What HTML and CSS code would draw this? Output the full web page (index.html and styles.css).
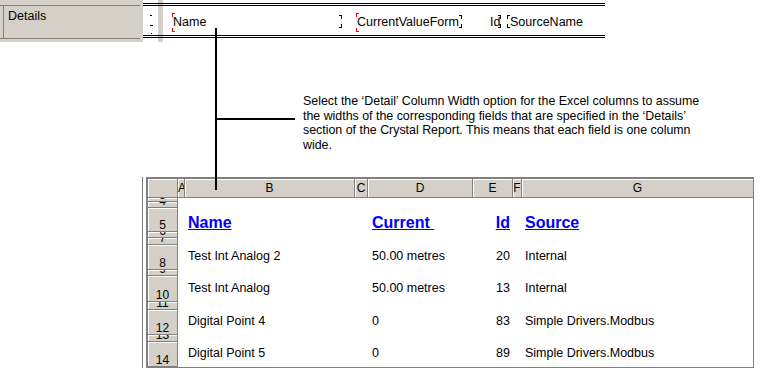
FILE: index.html
```html
<!DOCTYPE html>
<html lang="en">
<head>
    <meta charset="UTF-8">
    <title>Detail Column Width</title>
    <link rel="stylesheet" href="styles.css">
</head>
<body>
    <div class="page">
        <!-- Crystal Report designer: the Details section -->
        <div class="report">
            <div class="section-label">
                <div class="label-box"><div class="label-inner">Details</div></div>
            </div>
            <div class="design">
                <div class="band">
                    <svg class="ruler" width="15" height="29" viewBox="0 0 15 29">
                        <rect x="7" y="9" width="2" height="1" fill="#000"/>
                        <rect x="7" y="19" width="3" height="1" fill="#000"/>
                        <rect x="8" y="27" width="1" height="1" fill="#000"/>
                    </svg>
                    <div class="field f-name"><span class="m-start"></span>Name<span class="m-end"></span></div>
                    <div class="field f-current"><span class="m-start"></span>CurrentValueForm<span class="m-end"></span></div>
                    <div class="field f-id">Id<span class="m-end"></span></div>
                    <div class="field f-source"><span class="m-open"></span>SourceName</div>
                </div>
            </div>
        </div>

        <p class="note">Select the ‘Detail’ Column Width option for the Excel columns to assume<br>the widths of the corresponding fields that are specified in the ‘Details’<br>section of the Crystal Report. This means that each field is one column<br>wide.</p>

        <!-- Exported Excel sheet -->
        <div class="sheet">
            <div class="grid">
                <div class="row col-heads">
                    <div class="ch"></div>
                    <div class="ch">A</div>
                    <div class="ch">B</div>
                    <div class="ch">C</div>
                    <div class="ch">D</div>
                    <div class="ch">E</div>
                    <div class="ch">F</div>
                    <div class="ch">G</div>
                </div>
                <div class="row h4"><div class="rh">3</div></div>
                <div class="row h6"><div class="rh">4</div></div>
                <div class="row h24">
                    <div class="rh">5</div>
                    <div class="c head cb"><span class="link">Name</span></div>
                    <div class="c head cd"><span class="link">Current&nbsp;</span></div>
                    <div class="c head ce"><span class="link">Id</span></div>
                    <div class="c head cg"><span class="link">Source</span></div>
                </div>
                <div class="row h6"><div class="rh">6</div></div>
                <div class="row h7"><div class="rh">7</div></div>
                <div class="row h25">
                    <div class="rh">8</div>
                    <div class="c cb">Test Int Analog 2</div>
                    <div class="c cd">50.00 metres</div>
                    <div class="c ce">20</div>
                    <div class="c cg">Internal</div>
                </div>
                <div class="row h6"><div class="rh">9</div></div>
                <div class="row h26">
                    <div class="rh">10</div>
                    <div class="c cb">Test Int Analog</div>
                    <div class="c cd">50.00 metres</div>
                    <div class="c ce">13</div>
                    <div class="c cg">Internal</div>
                </div>
                <div class="row h8"><div class="rh">11</div></div>
                <div class="row h25">
                    <div class="rh">12</div>
                    <div class="c cb">Digital Point 4</div>
                    <div class="c cd">0</div>
                    <div class="c ce">83</div>
                    <div class="c cg">Simple Drivers.Modbus</div>
                </div>
                <div class="row h7"><div class="rh">13</div></div>
                <div class="row h25">
                    <div class="rh">14</div>
                    <div class="c cb">Digital Point 5</div>
                    <div class="c cd">0</div>
                    <div class="c ce">89</div>
                    <div class="c cg">Simple Drivers.Modbus</div>
                </div>
            </div>
        </div>

        <!-- callout lines linking the report field to the sheet column -->
        <div class="leader-v"></div>
        <div class="leader-h"></div>
    </div>
</body>
</html>
```

FILE: styles.css
```css
/* Screenshot of a Crystal Report section and the Excel sheet it exports to.
   Windows classic grey everywhere, Arial-ish text. */
body {
    margin: 0;
    background: #fff;
    font-family: "Liberation Sans", Arial, sans-serif;
    font-size: 12.5px;
    color: #000;
}
.page {
    position: relative;
    width: 764px;
    height: 376px;
    overflow: hidden;
}

/* ---- report designer ---- */
.report {
    display: flex;
    height: 42px;
}
.section-label {
    width: 143px;
    background: #d4d0c8;
}
.label-box {
    margin-top: 5px;
    width: 140px;
    height: 34px;
    box-sizing: border-box;
    border-top: 1px solid #808080;
    border-bottom: 1px solid #808080;
    padding-left: 3px;
}
.label-inner {
    height: 100%;
    box-sizing: border-box;
    border-left: 1px solid #808080;
    padding: 3px 4px;
}
.design {
    width: 462px;
    /* thin grey gutter between the ruler and the fields */
    background: linear-gradient(to right, #fff 15px, #d4d0c8 15px, #d4d0c8 20px, #fff 20px);
}
.band {
    margin-top: 3px;
    height: 35px;
    box-sizing: border-box;
    border-top: 3px double #000;
    border-bottom: 3px double #000;
    display: flex;
}
.ruler {
    flex: none;
    display: block;
}
.field {
    position: relative;
    flex: none;
    height: 19px;
    margin-top: 7px;
    line-height: 19px;
    padding-left: 1px;
    box-sizing: border-box;
    white-space: nowrap;
}
.f-name {
    margin-left: 14px;
    width: 170px;
}
.f-current {
    margin-left: 14px;
    width: 106px;
}
.f-id {
    margin-left: 28px;
    width: 11px;
    padding-left: 0;
}
.f-source {
    margin-left: 6px;
    padding-left: 3px;
}

/* field handles: red = selected start, black brackets = field edges */
.m-start, .m-end, .m-open {
    position: absolute;
    width: 3px;
}
.m-start {
    left: 0;
    top: 0;
    bottom: 0;
}
.m-end {
    right: 0;
    top: 2px;
    bottom: 4px;
}
.m-open {
    left: 0;
    top: 2px;
    bottom: 4px;
}
.m-start::before, .m-start::after,
.m-end::before, .m-end::after,
.m-open::before, .m-open::after {
    content: "";
    position: absolute;
    width: 2px;
    height: 3px;
}
.m-start::before, .m-start::after {
    left: 0;
    border-left: 1px solid #f00;
}
.m-start::before { top: 0; border-top: 1px solid #f00; }
.m-start::after { bottom: 0; border-bottom: 1px solid #f00; }
.m-end::before, .m-end::after {
    right: 0;
    border-right: 1px solid #000;
}
.m-end::before { top: 0; border-top: 1px solid #000; }
.m-end::after { bottom: 0; border-bottom: 1px solid #000; }
.m-open::before, .m-open::after {
    left: 0;
    border-left: 1px solid #000;
}
.m-open::before { top: 0; border-top: 1px solid #000; }
.m-open::after { bottom: 0; border-bottom: 1px solid #000; }

/* ---- annotation ---- */
.note {
    margin: 52px 0 0 303px;
    font-size: 12.4px;
    line-height: 14.7px;
    white-space: nowrap;
}

/* ---- excel sheet ---- */
.sheet {
    margin: 24px 0 0 142px;
    width: 612px;
    box-sizing: border-box;
    border-left: 1px solid #808080;
    padding-left: 3px;
}
.grid {
    border-left: 2px solid #808080;
    border-top: 2px solid #808080;
    border-right: 1px solid #808080;
    border-bottom: 1px solid #808080;
}
.row {
    display: grid;
    grid-template-columns: 30px 7px 170px 13px 105px 40px 9px 231px;
}
.col-heads {
    height: 19px;
}
.ch {
    background: #d4d0c8;
    box-sizing: border-box;
    border-right: 1px solid #808080;
    border-bottom: 1px solid #808080;
    box-shadow: inset 1px 1px 0 #fff;
    text-align: center;
    font-size: 12px;
    line-height: 18px;
    overflow: hidden;
}
.ch:last-child {
    border-right: none;
}
.h4 { height: 4px; }
.h6 { height: 6px; }
.h7 { height: 7px; }
.h8 { height: 8px; }
.h24 { height: 24px; }
.h25 { height: 25px; }
.h26 { height: 26px; }
.rh {
    grid-column: 1;
    background: #d4d0c8;
    box-sizing: border-box;
    border-right: 1px solid #808080;
    border-bottom: 1px solid #808080;
    box-shadow: inset 1px 1px 0 #fff;
    display: flex;
    align-items: flex-end;
    justify-content: center;
    font-size: 12px;
    line-height: 12px;
    overflow: hidden;
}
.c {
    display: flex;
    align-items: center;
    padding-bottom: 2px;
    white-space: nowrap;
}
.cb { grid-column: 3; padding-left: 3px; }
.cd { grid-column: 5; padding-left: 4px; }
.ce { grid-column: 6; justify-content: flex-end; padding-right: 3px; }
.cg { grid-column: 8; padding-left: 3px; }
.c.head {
    align-items: flex-end;
    padding-bottom: 0;
    font-size: 16px;
    font-weight: bold;
    color: #00f;
}
.link {
    text-decoration: underline;
}

/* callout leader lines */
.leader-v {
    position: absolute;
    left: 215px;
    top: 28px;
    width: 2px;
    height: 162px;
    background: #000;
}
.leader-h {
    position: absolute;
    left: 215px;
    top: 118px;
    width: 80px;
    height: 2px;
    background: #000;
}
```
